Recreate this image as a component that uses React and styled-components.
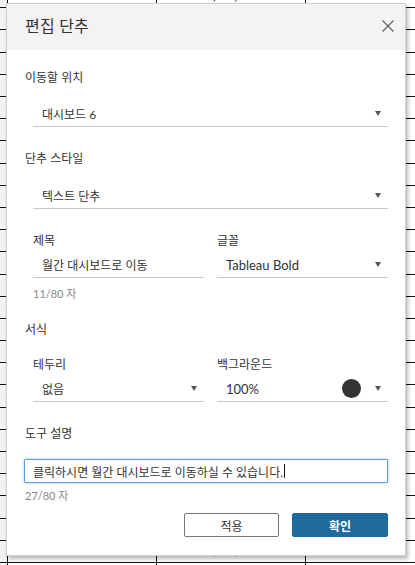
import React from "react";
import styled, { createGlobalStyle } from "styled-components";

const GlobalStyle = createGlobalStyle`
  html, body { margin: 0; padding: 0; background: #fff; }
  body { font-family: Lato, "Noto Sans CJK KR", "Noto Sans", sans-serif; color: #333; }
`;

const Page = styled.div`
  position: relative;
  width: 415px;
  height: 565px;
  overflow: hidden;
  background: #fff;
`;

const Sheet = styled.div`
  display: flex;
  flex-direction: column;
  margin-top: -13.9px;
`;

const SheetRow = styled.div`
  display: flex;
  height: 22.2px;
  box-sizing: border-box;
  border-bottom: 1px solid #111;
`;

const RowHead = styled.div`
  width: 7px;
  flex: none;
  background: #f2f2f2;
`;

const Cell = styled.div`
  width: 149px;
  flex: none;
  box-sizing: border-box;
  border-left: 1px solid #111;
  display: flex;
  align-items: flex-end;
  justify-content: ${(p) => (p.$align === "right" ? "flex-end" : "center")};
  padding: 0 6px 5px;
  font-family: "Liberation Sans", Arial, sans-serif;
  font-size: 11px;
  line-height: 12px;
  font-weight: bold;
  color: ${(p) => p.$color || "#222"};
`;

const Dialog = styled.div`
  position: absolute;
  left: 6px;
  top: 3px;
  width: 400px;
  height: 553px;
  box-sizing: border-box;
  background: #fff;
  border: 1px solid #d0d0d0;
  box-shadow: 2px 3px 4px rgba(0, 0, 0, 0.28);
  display: flex;
  flex-direction: column;
  font-family: Lato, "Noto Sans CJK KR", sans-serif;
`;

const Header = styled.div`
  height: 46px;
  box-sizing: border-box;
  background: #f3f3f3;
  display: flex;
  align-items: center;
  justify-content: space-between;
  padding: 0 11px 2px 18px;
  flex: none;
`;

const Title = styled.div`
  font-size: 16px;
  line-height: 20px;
  color: #333;
  letter-spacing: 0.2px;
`;

const CloseButton = styled.button`
  border: none;
  background: none;
  padding: 0;
  width: 13px;
  height: 13px;
  display: flex;
  align-items: center;
  justify-content: center;
  color: #666;
`;

const Body = styled.div`
  display: flex;
  flex-direction: column;
  padding: 20px 17px 0 18px;
`;

const SectionLabel = styled.div`
  font-size: 12px;
  line-height: 16px;
  color: #333;
  margin-top: ${(p) => p.$mt || 0}px;
`;

const Indent = styled.div`
  padding-left: 8px;
  margin-top: ${(p) => p.$mt || 0}px;
`;

const TwoCol = styled.div`
  display: grid;
  grid-template-columns: 1fr 1fr;
  column-gap: 13px;
  padding-left: 8px;
  margin-top: ${(p) => p.$mt || 0}px;
`;

const Field = styled.div`
  display: flex;
  flex-direction: column;
`;

const SubLabel = styled.div`
  font-size: 12px;
  line-height: 16px;
  color: #333;
  margin-bottom: 5px;
`;

const Select = styled.div`
  height: 24px;
  box-sizing: border-box;
  border-bottom: 1px solid #c8c8c8;
  display: flex;
  align-items: center;
  padding: 0 ${(p) => p.$pr ?? 7}px 2px 9px;
  font-size: 12px;
  color: #333;
`;

const Value = styled.span`
  flex: 1;
  white-space: nowrap;
  font-size: ${(p) => (p.$latin ? 13 : 12)}px;
`;

const Arrow = styled.span`
  width: 0;
  height: 0;
  border-left: 3.5px solid transparent;
  border-right: 3.5px solid transparent;
  border-top: 5px solid #555;
`;

const Swatch = styled.span`
  width: 19px;
  height: 19px;
  border-radius: 50%;
  background: #333;
  margin-right: 14px;
`;

const Counter = styled.div`
  font-size: 11px;
  line-height: 14px;
  color: #888;
  padding-left: ${(p) => p.$pl || 0}px;
  margin-top: ${(p) => p.$mt || 0}px;
`;

const TextInput = styled.div`
  margin-top: 17px;
  margin-left: -1px;
  height: 24px;
  box-sizing: border-box;
  border: 1px solid #5a9fe0;
  box-shadow: 0 0 3px rgba(74, 144, 226, 0.55);
  border-radius: 1px;
  display: flex;
  align-items: center;
  padding: 0 8px;
  font-size: 12px;
  color: #333;
  white-space: nowrap;
`;

const Caret = styled.span`
  display: inline-block;
  width: 1px;
  height: 14px;
  background: #111;
  margin-left: 1px;
`;

const Footer = styled.div`
  display: flex;
  justify-content: flex-end;
  gap: 13px;
  margin-top: 10px;
`;

const Button = styled.button`
  width: ${(p) => p.$w}px;
  height: 24px;
  box-sizing: border-box;
  border-radius: 2px;
  font-family: Lato, "Noto Sans CJK KR", sans-serif;
  font-size: 12px;
  font-weight: ${(p) => (p.$primary ? 700 : 400)};
  color: ${(p) => (p.$primary ? "#fff" : "#333")};
  background: ${(p) => (p.$primary ? "#1f6a9c" : "#fff")};
  border: 1px solid ${(p) => (p.$primary ? "#1f6a9c" : "#777")};
  padding: 0;
`;

const topRow = ["12.3%", "3,745,236", "24.6%"];
const bottomRow = ["22.5%", "5,398,632", "18.9%"];

export default function App() {
  const rows = Array.from({ length: 27 }, (_, i) => i);
  return (
    <>
      <GlobalStyle />
      <Page>
        <Sheet>
          {rows.map((i) => {
            const data = i === 0 ? topRow : i === 25 ? bottomRow : ["", "", ""];
            const c0 = i === 0 ? "#c4531f" : "#2a6ab5";
            return (
              <SheetRow key={i}>
                <RowHead />
                <Cell $color={c0}>{data[0]}</Cell>
                <Cell $color="#222">{data[1]}</Cell>
                <Cell $color="#2a6ab5" $align="right">{data[2]}</Cell>
              </SheetRow>
            );
          })}
        </Sheet>
        <Dialog>
          <Header>
            <Title>편집 단추</Title>
            <CloseButton aria-label="닫기">
              <svg width="12" height="12" viewBox="0 0 12 12">
                <path d="M0.5 0.5 L11.5 11.5 M11.5 0.5 L0.5 11.5" stroke="#666" strokeWidth="1.3" fill="none" />
              </svg>
            </CloseButton>
          </Header>
          <Body>
            <SectionLabel>이동할 위치</SectionLabel>
            <Indent $mt={17}>
              <Select>
                <Value>대시보드 6</Value>
                <Arrow />
              </Select>
            </Indent>

            <SectionLabel $mt={24}>단추 스타일</SectionLabel>
            <Indent $mt={18}>
              <Select>
                <Value>텍스트 단추</Value>
                <Arrow />
              </Select>
            </Indent>

            <TwoCol $mt={24}>
              <Field>
                <SubLabel>제목</SubLabel>
                <Select>
                  <Value>월간 대시보드로 이동</Value>
                </Select>
              </Field>
              <Field>
                <SubLabel>글꼴</SubLabel>
                <Select>
                  <Value $latin>Tableau Bold</Value>
                  <Arrow />
                </Select>
              </Field>
            </TwoCol>
            <Counter $pl={8} $mt={9}>11/80 자</Counter>

            <SectionLabel $mt={21}>서식</SectionLabel>
            <TwoCol $mt={19}>
              <Field>
                <SubLabel>테두리</SubLabel>
                <Select $pr={7}>
                  <Value>없음</Value>
                  <Arrow />
                </Select>
              </Field>
              <Field>
                <SubLabel>백그라운드</SubLabel>
                <Select>
                  <Value $latin>100%</Value>
                  <Swatch />
                  <Arrow />
                </Select>
              </Field>
            </TwoCol>

            <SectionLabel $mt={24}>도구 설명</SectionLabel>
            <TextInput>
              클릭하시면 월간 대시보드로 이동하실 수 있습니다.
              <Caret />
            </TextInput>
            <Counter $mt={6}>27/80 자</Counter>

            <Footer>
              <Button $w={95}>적용</Button>
              <Button $w={96} $primary>확인</Button>
            </Footer>
          </Body>
        </Dialog>
      </Page>
    </>
  );
}
